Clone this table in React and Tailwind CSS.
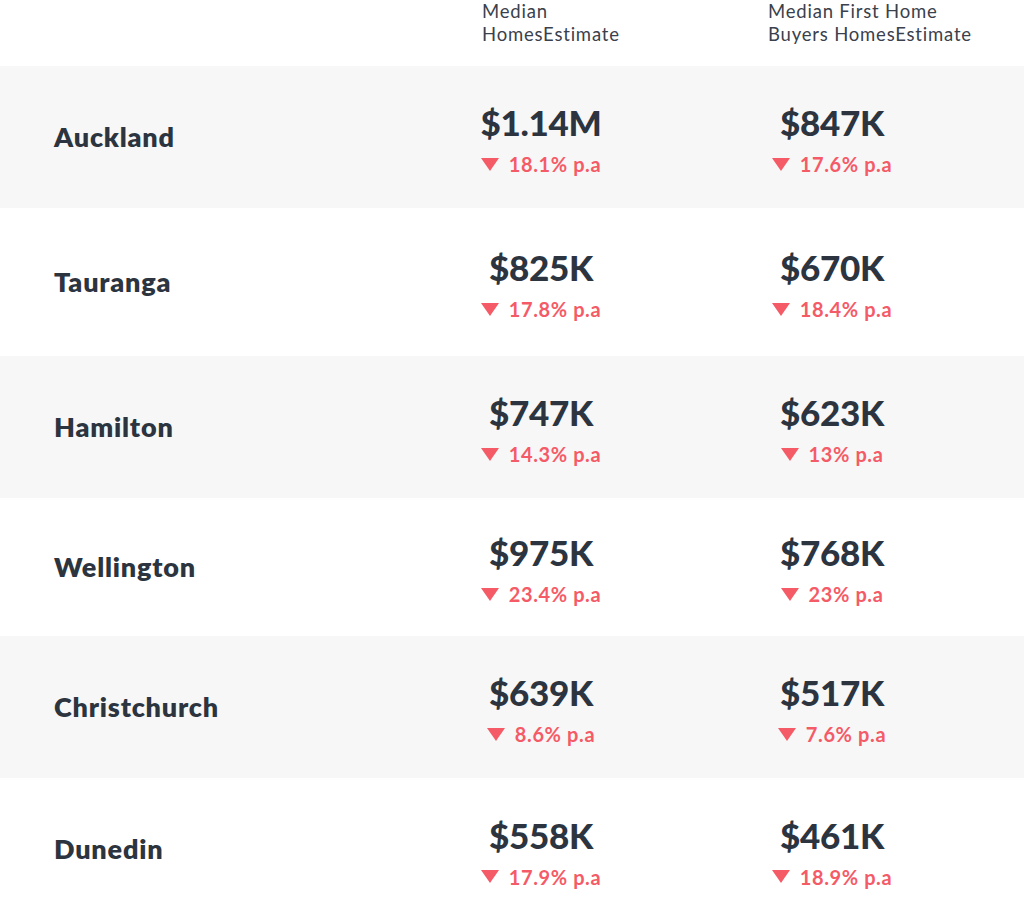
const rows = [
  { city: 'Auckland', h: 'h-[142px]', bg: 'bg-[#f7f7f7]', a: ['$1.14M', '18.1%'], b: ['$847K', '17.6%'] },
  { city: 'Tauranga', h: 'h-[148px]', bg: 'bg-white', a: ['$825K', '17.8%'], b: ['$670K', '18.4%'] },
  { city: 'Hamilton', h: 'h-[142px]', bg: 'bg-[#f7f7f7]', a: ['$747K', '14.3%'], b: ['$623K', '13%'] },
  { city: 'Wellington', h: 'h-[138px]', bg: 'bg-white', a: ['$975K', '23.4%'], b: ['$768K', '23%'] },
  { city: 'Christchurch', h: 'h-[142px]', bg: 'bg-[#f7f7f7]', a: ['$639K', '8.6%'], b: ['$517K', '7.6%'] },
  { city: 'Dunedin', h: 'h-[143px]', bg: 'bg-white', a: ['$558K', '17.9%'], b: ['$461K', '18.9%'] },
]

function Estimate({ value, change }) {
  return (
    <div className="w-[200px] pt-[4px] flex flex-col items-center">
      <div className="text-[35px] leading-[40px] font-black tracking-[-0.3px] text-[#2c3440]">{value}</div>
      <div className="mt-[10px] flex items-center gap-[10px] text-[20px] leading-[24px] font-bold tracking-[0.6px] text-[#f45b67]">
        <svg width="18" height="13" viewBox="0 0 18 13" className="shrink-0">
          <path d="M0 0H18L9 13Z" fill="#f45b67" />
        </svg>
        <span>{change} p.a</span>
      </div>
    </div>
  )
}

export default function App() {
  return (
    <div className="w-[1024px] bg-white font-['Lato','Liberation_Sans',sans-serif] text-[#2c3440]">
      <div className="h-[66px] flex text-[18.5px] leading-[23px] font-normal tracking-[0.8px] text-[#3a414c]">
        <div className="w-[441px]" />
        <div className="w-[200px] pl-[41px]">
          <div>Median</div>
          <div>HomesEstimate</div>
        </div>
        <div className="w-[91px]" />
        <div className="w-[260px] pl-[36px]">
          <div>Median First Home</div>
          <div>Buyers HomesEstimate</div>
        </div>
      </div>
      {rows.map((r) => (
        <div key={r.city} className={`flex items-center ${r.h} ${r.bg}`}>
          <div className="w-[441px] pl-[54px] text-[27px] font-extrabold tracking-[0.8px] text-[#2c3440]">{r.city}</div>
          <Estimate value={r.a[0]} change={r.a[1]} />
          <div className="w-[91px]" />
          <Estimate value={r.b[0]} change={r.b[1]} />
        </div>
      ))}
    </div>
  )
}
